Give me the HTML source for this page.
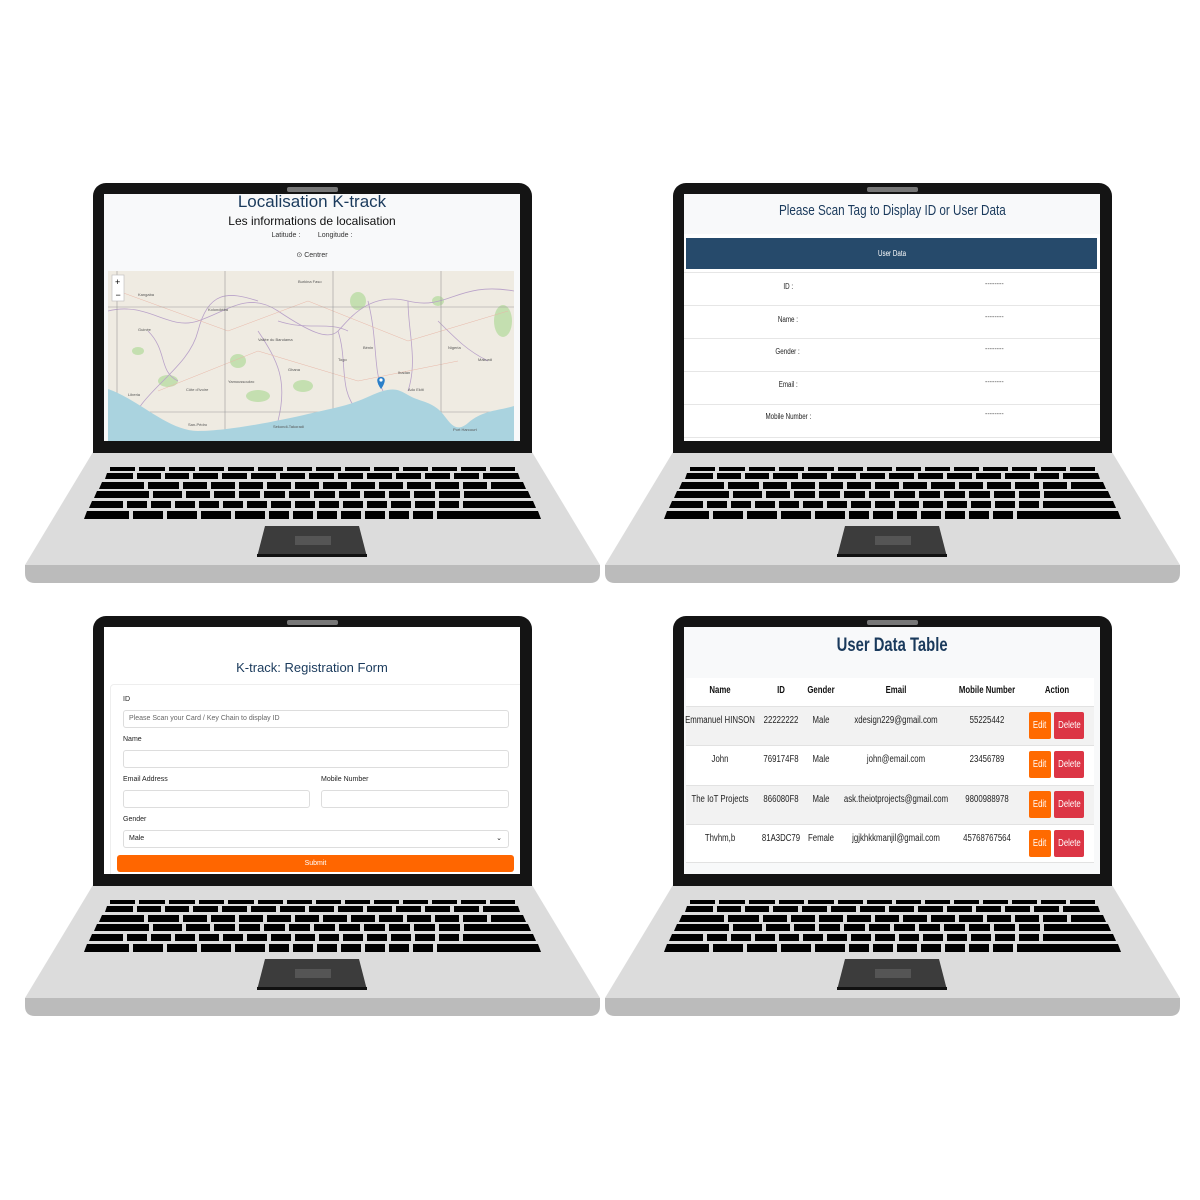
<!DOCTYPE html>
<html><head><meta charset="utf-8">
<style>
*{margin:0;padding:0;box-sizing:border-box}
body{width:1200px;height:1200px;background:#fff;position:relative;overflow:hidden;font-family:"Liberation Sans",sans-serif}
.lap{position:absolute;width:576px;height:400px}
.bez{position:absolute;left:68px;top:0;width:439px;height:270px;background:#141414;border-radius:13px 13px 0 0}
.cam{position:absolute;left:194px;top:4px;width:51px;height:5px;background:#777;border-radius:2px}
.scr{position:absolute;left:11px;top:11px;width:416px;height:247px;background:#fff;overflow:hidden}
.base{position:absolute;left:0;top:269px}
.n{display:inline-block;transform:scaleX(.78);white-space:nowrap}
.c{position:absolute;left:0;right:0;text-align:center;white-space:nowrap}
.a{position:absolute;white-space:nowrap}
</style></head><body>

<svg width="0" height="0" style="position:absolute">
<defs><g id="kb">
<polygon points="68,269 507,269 575,382 0,382" fill="#dcdcdc"/>
<path d="M0,382 H575 V390 Q575,400 565,400 H10 Q0,400 0,390Z" fill="#bbb"/>
<g fill="#000"><rect x="85" y="284" width="405" height="4"/><polygon points="82,290 493,290 495,296 80,296"/><polygon points="77,299 498,299 501,306 74,306"/><polygon points="72,308 503,308 506,315 69,315"/><polygon points="67,318 508,318 511,325 64,325"/><polygon points="62,328 513,328 516,336 59,336"/></g>
<g fill="#dcdcdc">
<rect x="110" y="284" width="4" height="4"/><rect x="140" y="284" width="4" height="4"/><rect x="170" y="284" width="4" height="4"/><rect x="199" y="284" width="4" height="4"/><rect x="229" y="284" width="4" height="4"/><rect x="258" y="284" width="4" height="4"/><rect x="287" y="284" width="4" height="4"/><rect x="316" y="284" width="4" height="4"/><rect x="345" y="284" width="4" height="4"/><rect x="374" y="284" width="4" height="4"/><rect x="403" y="284" width="4" height="4"/><rect x="432" y="284" width="4" height="4"/><rect x="461" y="284" width="4" height="4"/>
<rect x="108" y="290" width="4" height="6"/><rect x="136" y="290" width="4" height="6"/><rect x="164" y="290" width="4" height="6"/><rect x="193" y="290" width="4" height="6"/><rect x="222" y="290" width="4" height="6"/><rect x="251" y="290" width="4" height="6"/><rect x="280" y="290" width="4" height="6"/><rect x="309" y="290" width="4" height="6"/><rect x="338" y="290" width="4" height="6"/><rect x="367" y="290" width="4" height="6"/><rect x="396" y="290" width="4" height="6"/><rect x="425" y="290" width="4" height="6"/><rect x="454" y="290" width="4" height="6"/>
<rect x="119" y="299" width="4" height="7"/><rect x="154" y="299" width="4" height="7"/><rect x="182" y="299" width="4" height="7"/><rect x="210" y="299" width="4" height="7"/><rect x="238" y="299" width="4" height="7"/><rect x="266" y="299" width="4" height="7"/><rect x="294" y="299" width="4" height="7"/><rect x="322" y="299" width="4" height="7"/><rect x="350" y="299" width="4" height="7"/><rect x="378" y="299" width="4" height="7"/><rect x="406" y="299" width="4" height="7"/><rect x="434" y="299" width="4" height="7"/><rect x="462" y="299" width="4" height="7"/>
<rect x="124" y="308" width="4" height="7"/><rect x="157" y="308" width="4" height="7"/><rect x="185" y="308" width="4" height="7"/><rect x="210" y="308" width="4" height="7"/><rect x="235" y="308" width="4" height="7"/><rect x="260" y="308" width="4" height="7"/><rect x="285" y="308" width="4" height="7"/><rect x="310" y="308" width="4" height="7"/><rect x="335" y="308" width="4" height="7"/><rect x="360" y="308" width="4" height="7"/><rect x="385" y="308" width="4" height="7"/><rect x="410" y="308" width="4" height="7"/><rect x="435" y="308" width="4" height="7"/>
<rect x="98" y="318" width="4" height="7"/><rect x="122" y="318" width="4" height="7"/><rect x="146" y="318" width="4" height="7"/><rect x="170" y="318" width="4" height="7"/><rect x="194" y="318" width="4" height="7"/><rect x="218" y="318" width="4" height="7"/><rect x="242" y="318" width="4" height="7"/><rect x="266" y="318" width="4" height="7"/><rect x="290" y="318" width="4" height="7"/><rect x="314" y="318" width="4" height="7"/><rect x="338" y="318" width="4" height="7"/><rect x="362" y="318" width="4" height="7"/><rect x="386" y="318" width="4" height="7"/><rect x="410" y="318" width="4" height="7"/><rect x="434" y="318" width="4" height="7"/>
<rect x="104" y="328" width="4" height="8"/><rect x="138" y="328" width="4" height="8"/><rect x="172" y="328" width="4" height="8"/><rect x="206" y="328" width="4" height="8"/><rect x="240" y="328" width="4" height="8"/><rect x="264" y="328" width="4" height="8"/><rect x="288" y="328" width="4" height="8"/><rect x="312" y="328" width="4" height="8"/><rect x="336" y="328" width="4" height="8"/><rect x="360" y="328" width="4" height="8"/><rect x="384" y="328" width="4" height="8"/><rect x="408" y="328" width="4" height="8"/>
</g>
<polygon points="240,343 334,343 342,374 232,374" fill="#3c3c3c"/>
<rect x="232" y="371" width="110" height="3" fill="#111"/>
<rect x="270" y="353" width="36" height="9" fill="#555"/>
</g></defs></svg>

<!-- laptop 1 -->
<div class="lap" style="left:25px;top:183px">
<svg class="base" width="576" height="132" viewBox="0 269 576 132"><use href="#kb"/></svg>
<div class="bez"><div class="cam"></div>
<div class="scr" style="background:#f8f9fa">
 <div class="c" style="top:-2px;font-size:17px;color:#1a3a5c">Localisation K-track</div>
 <div class="c" style="top:20px;font-size:12px;color:#111">Les informations de localisation</div>
 <div class="c" style="top:38px;font-size:7px;color:#333">Latitude : &nbsp; &nbsp; &nbsp; &nbsp; Longitude :</div>
 <div class="c" style="top:57px;font-size:7px;color:#333">⊙ Centrer</div>
 <svg style="position:absolute;left:4px;top:77px" width="406" height="170" viewBox="0 0 406 170">
  <rect width="406" height="170" fill="#efebe2"/>
  <g fill="#c4dfb0"><ellipse cx="60" cy="110" rx="10" ry="6"/><ellipse cx="130" cy="90" rx="8" ry="7"/><ellipse cx="150" cy="125" rx="12" ry="6"/><ellipse cx="195" cy="115" rx="10" ry="6"/><ellipse cx="250" cy="30" rx="8" ry="9"/><ellipse cx="395" cy="50" rx="9" ry="16"/><ellipse cx="330" cy="30" rx="6" ry="5"/><ellipse cx="30" cy="80" rx="6" ry="4"/></g>
  <g fill="none" stroke="#b9a2c9" stroke-width=".8"><path d="M0,40 C40,30 60,60 90,50 S140,20 170,40 S220,70 230,60 S260,20 300,30 S350,10 406,20"/><path d="M20,160 C30,120 80,100 90,60 S120,20 150,30"/><path d="M150,60 C170,90 180,110 170,150"/><path d="M230,60 C240,90 230,120 250,140"/><path d="M260,30 C270,70 265,100 275,120"/><path d="M300,30 C300,60 310,90 300,120"/><path d="M170,50 C200,60 220,50 240,60"/><path d="M40,60 C60,80 50,100 70,110"/><path d="M330,50 C350,70 360,80 380,90"/></g>
  <g fill="none" stroke="#e8b7a8" stroke-width=".5"><path d="M10,20 L120,60 L200,30 L300,70 L400,40"/><path d="M50,120 L150,80 L250,110 L350,90"/></g>
  <g stroke="#999" stroke-width=".6"><line x1="0" y1="36" x2="406" y2="36"/><line x1="0" y1="141" x2="406" y2="141"/><line x1="9" y1="0" x2="9" y2="170"/><line x1="117" y1="0" x2="117" y2="170"/><line x1="225" y1="0" x2="225" y2="170"/><line x1="333" y1="0" x2="333" y2="170"/></g>
  <path d="M0,118 C30,128 60,160 90,160 S170,150 200,143 S240,135 262,125 S290,118 300,124 S320,130 330,138 S345,165 360,152 S390,140 406,135 V170 H0Z" fill="#aad3df"/>
  <g font-size="4" fill="#555"><text x="30" y="25">Kangaba</text><text x="190" y="12">Burkina Faso</text><text x="30" y="60">Guinée</text><text x="78" y="120">Côte d'Ivoire</text><text x="180" y="100">Ghana</text><text x="230" y="90">Togo</text><text x="255" y="78">Bénin</text><text x="340" y="78">Nigeria</text><text x="80" y="155">San-Pédro</text><text x="165" y="157">Sekondi-Takoradi</text><text x="345" y="160">Port Harcourt</text><text x="20" y="125">Liberia</text><text x="290" y="103">Ibadan</text><text x="100" y="40">Kolondiéba</text><text x="150" y="70">Vallée du Bandama</text><text x="120" y="112">Yamoussoukro</text><text x="370" y="90">Makurdi</text><text x="300" y="120">Ado Ekiti</text></g>
  <rect x="4" y="4" width="12" height="26" fill="#fff" stroke="#bbb" stroke-width=".6"/>
  <text x="7" y="14" font-size="9" fill="#000">+</text><text x="7.5" y="27" font-size="9" fill="#000">−</text>
  <path d="M273,118 C268,111 268,106 273,106 C278,106 278,111 273,118Z" fill="#2a7fc9"/><circle cx="273" cy="109" r="1.6" fill="#fff"/>
 </svg>
</div></div>
</div>

<!-- laptop 2 -->
<div class="lap" style="left:605px;top:183px">
<svg class="base" width="576" height="132" viewBox="0 269 576 132"><use href="#kb"/></svg>
<div class="bez"><div class="cam"></div>
<div class="scr">
 <div style="position:absolute;left:0;top:0;width:416px;height:40px;background:#f8f9fa"></div>
 <div class="c" style="top:8px;font-size:15px;color:#1a3a5c"><span class="n">Please Scan Tag to Display ID or User Data</span></div>
 <div style="position:absolute;left:2px;top:44px;width:411px;height:31px;background:#264a6b"></div>
 <div class="c" style="top:55px;font-size:8px;color:#fff"><span class="n">User Data</span></div>
 <div style="position:absolute;left:0;top:78px;width:416px;border-top:1px solid #e6e6e6"></div>
 <div style="position:absolute;left:0;top:111px;width:416px;border-top:1px solid #e6e6e6"></div>
 <div style="position:absolute;left:0;top:144px;width:416px;border-top:1px solid #e6e6e6"></div>
 <div style="position:absolute;left:0;top:177px;width:416px;border-top:1px solid #e6e6e6"></div>
 <div style="position:absolute;left:0;top:210px;width:416px;border-top:1px solid #e6e6e6"></div>
 <div style="position:absolute;left:0;top:243px;width:416px;border-top:1px solid #e6e6e6"></div>
 <div class="a" style="left:0;width:208px;text-align:center;top:88px;font-size:8px;color:#222"><span class="n">ID :</span></div>
 <div class="a" style="left:0;width:208px;text-align:center;top:121px;font-size:8px;color:#222"><span class="n">Name :</span></div>
 <div class="a" style="left:0;width:208px;text-align:center;top:153px;font-size:8px;color:#222"><span class="n">Gender :</span></div>
 <div class="a" style="left:0;width:208px;text-align:center;top:186px;font-size:8px;color:#222"><span class="n">Email :</span></div>
 <div class="a" style="left:0;width:208px;text-align:center;top:218px;font-size:8px;color:#222"><span class="n">Mobile Number :</span></div>
 <div class="a" style="left:301px;top:87px;font-size:7px;color:#444">--------</div>
 <div class="a" style="left:301px;top:120px;font-size:7px;color:#444">--------</div>
 <div class="a" style="left:301px;top:152px;font-size:7px;color:#444">--------</div>
 <div class="a" style="left:301px;top:185px;font-size:7px;color:#444">--------</div>
 <div class="a" style="left:301px;top:217px;font-size:7px;color:#444">--------</div>
</div></div>
</div>

<!-- laptop 3 -->
<div class="lap" style="left:25px;top:616px">
<svg class="base" width="576" height="132" viewBox="0 269 576 132"><use href="#kb"/></svg>
<div class="bez"><div class="cam"></div>
<div class="scr">
 <div class="c" style="top:33px;font-size:13px;color:#1a3a5c">K-track: Registration Form</div>
 <div style="position:absolute;left:6px;top:57px;width:420px;height:200px;border:1px solid #eee;border-radius:4px"></div>
 <div class="a" style="left:19px;top:69px;font-size:7px;color:#222">ID</div>
 <div style="position:absolute;left:19px;top:83px;width:386px;height:18px;border:1px solid #ddd;border-radius:3px;font-size:7px;color:#666;padding:4px 5px">Please Scan your Card / Key Chain to display ID</div>
 <div class="a" style="left:19px;top:109px;font-size:7px;color:#222">Name</div>
 <div style="position:absolute;left:19px;top:123px;width:386px;height:18px;border:1px solid #ddd;border-radius:3px"></div>
 <div class="a" style="left:19px;top:149px;font-size:7px;color:#222">Email Address</div>
 <div class="a" style="left:217px;top:149px;font-size:7px;color:#222">Mobile Number</div>
 <div style="position:absolute;left:19px;top:163px;width:187px;height:18px;border:1px solid #ddd;border-radius:3px"></div>
 <div style="position:absolute;left:217px;top:163px;width:188px;height:18px;border:1px solid #ddd;border-radius:3px"></div>
 <div class="a" style="left:19px;top:189px;font-size:7px;color:#222">Gender</div>
 <div style="position:absolute;left:19px;top:203px;width:386px;height:18px;border:1px solid #ddd;border-radius:3px;font-size:7px;color:#222;padding:4px 5px">Male<span style="position:absolute;right:6px;top:3px">⌄</span></div>
 <div style="position:absolute;left:13px;top:228px;width:397px;height:17px;background:#ff6600;border-radius:3px;font-size:7px;color:#fff;text-align:center;line-height:17px">Submit</div>
</div></div>
</div>

<!-- laptop 4 -->
<div class="lap" style="left:605px;top:616px">
<svg class="base" width="576" height="132" viewBox="0 269 576 132"><use href="#kb"/></svg>
<div class="bez"><div class="cam"></div>
<div class="scr" style="background:#f8f9fa">
 <div class="c" style="top:8px;font-size:19px;font-weight:bold;color:#1a3a5c"><span class="n">User Data Table</span></div>
 <div style="position:absolute;left:2px;top:51px;width:408px;height:28px;background:#fff"></div>
 <div style="position:absolute;left:2px;top:79px;width:408px;height:39px;background:#f2f2f2;border-top:1px solid #e2e2e2"></div>
 <div style="position:absolute;left:2px;top:118px;width:408px;height:40px;background:#fff;border-top:1px solid #e2e2e2"></div>
 <div style="position:absolute;left:2px;top:158px;width:408px;height:39px;background:#f2f2f2;border-top:1px solid #e2e2e2"></div>
 <div style="position:absolute;left:2px;top:197px;width:408px;height:39px;background:#fff;border-top:1px solid #e2e2e2;border-bottom:1px solid #e2e2e2"></div>
 <div style="position:absolute;left:0;top:58px;width:416px;font-size:10px;font-weight:bold;color:#111">
  <div class="a" style="left:36px;transform:translateX(-50%)"><span class="n">Name</span></div>
  <div class="a" style="left:97px;transform:translateX(-50%)"><span class="n">ID</span></div>
  <div class="a" style="left:137px;transform:translateX(-50%)"><span class="n">Gender</span></div>
  <div class="a" style="left:212px;transform:translateX(-50%)"><span class="n">Email</span></div>
  <div class="a" style="left:303px;transform:translateX(-50%)"><span class="n">Mobile Number</span></div>
  <div class="a" style="left:373px;transform:translateX(-50%)"><span class="n">Action</span></div>
 </div>
 <div style="position:absolute;left:0;top:88px;width:416px;font-size:10px;color:#222">
  <div class="a" style="left:36px;transform:translateX(-50%)"><span class="n">Emmanuel HINSON</span></div>
  <div class="a" style="left:97px;transform:translateX(-50%)"><span class="n">22222222</span></div>
  <div class="a" style="left:137px;transform:translateX(-50%)"><span class="n">Male</span></div>
  <div class="a" style="left:212px;transform:translateX(-50%)"><span class="n">xdesign229@gmail.com</span></div>
  <div class="a" style="left:303px;transform:translateX(-50%)"><span class="n">55225442</span></div>
 </div>
 <div style="position:absolute;left:0;top:127px;width:416px;font-size:10px;color:#222">
  <div class="a" style="left:36px;transform:translateX(-50%)"><span class="n">John</span></div>
  <div class="a" style="left:97px;transform:translateX(-50%)"><span class="n">769174F8</span></div>
  <div class="a" style="left:137px;transform:translateX(-50%)"><span class="n">Male</span></div>
  <div class="a" style="left:212px;transform:translateX(-50%)"><span class="n">john@email.com</span></div>
  <div class="a" style="left:303px;transform:translateX(-50%)"><span class="n">23456789</span></div>
 </div>
 <div style="position:absolute;left:0;top:167px;width:416px;font-size:10px;color:#222">
  <div class="a" style="left:36px;transform:translateX(-50%)"><span class="n">The IoT Projects</span></div>
  <div class="a" style="left:97px;transform:translateX(-50%)"><span class="n">866080F8</span></div>
  <div class="a" style="left:137px;transform:translateX(-50%)"><span class="n">Male</span></div>
  <div class="a" style="left:212px;transform:translateX(-50%)"><span class="n">ask.theiotprojects@gmail.com</span></div>
  <div class="a" style="left:303px;transform:translateX(-50%)"><span class="n">9800988978</span></div>
 </div>
 <div style="position:absolute;left:0;top:206px;width:416px;font-size:10px;color:#222">
  <div class="a" style="left:36px;transform:translateX(-50%)"><span class="n">Thvhm,b</span></div>
  <div class="a" style="left:97px;transform:translateX(-50%)"><span class="n">81A3DC79</span></div>
  <div class="a" style="left:137px;transform:translateX(-50%)"><span class="n">Female</span></div>
  <div class="a" style="left:212px;transform:translateX(-50%)"><span class="n">jgjkhkkmanjil@gmail.com</span></div>
  <div class="a" style="left:303px;transform:translateX(-50%)"><span class="n">45768767564</span></div>
 </div>
 <div style="position:absolute;left:345px;top:85px;width:22px;height:27px;background:#ff6a00;border-radius:2px;color:#fff;font-size:10px;text-align:center;line-height:27px"><span class="n">Edit</span></div>
 <div style="position:absolute;left:370px;top:85px;width:30px;height:27px;background:#dc3545;border-radius:2px;color:#fff;font-size:10px;text-align:center;line-height:27px"><span class="n">Delete</span></div>
 <div style="position:absolute;left:345px;top:124px;width:22px;height:27px;background:#ff6a00;border-radius:2px;color:#fff;font-size:10px;text-align:center;line-height:27px"><span class="n">Edit</span></div>
 <div style="position:absolute;left:370px;top:124px;width:30px;height:27px;background:#dc3545;border-radius:2px;color:#fff;font-size:10px;text-align:center;line-height:27px"><span class="n">Delete</span></div>
 <div style="position:absolute;left:345px;top:164px;width:22px;height:27px;background:#ff6a00;border-radius:2px;color:#fff;font-size:10px;text-align:center;line-height:27px"><span class="n">Edit</span></div>
 <div style="position:absolute;left:370px;top:164px;width:30px;height:27px;background:#dc3545;border-radius:2px;color:#fff;font-size:10px;text-align:center;line-height:27px"><span class="n">Delete</span></div>
 <div style="position:absolute;left:345px;top:203px;width:22px;height:27px;background:#ff6a00;border-radius:2px;color:#fff;font-size:10px;text-align:center;line-height:27px"><span class="n">Edit</span></div>
 <div style="position:absolute;left:370px;top:203px;width:30px;height:27px;background:#dc3545;border-radius:2px;color:#fff;font-size:10px;text-align:center;line-height:27px"><span class="n">Delete</span></div>
</div></div>
</div>

</body></html>
